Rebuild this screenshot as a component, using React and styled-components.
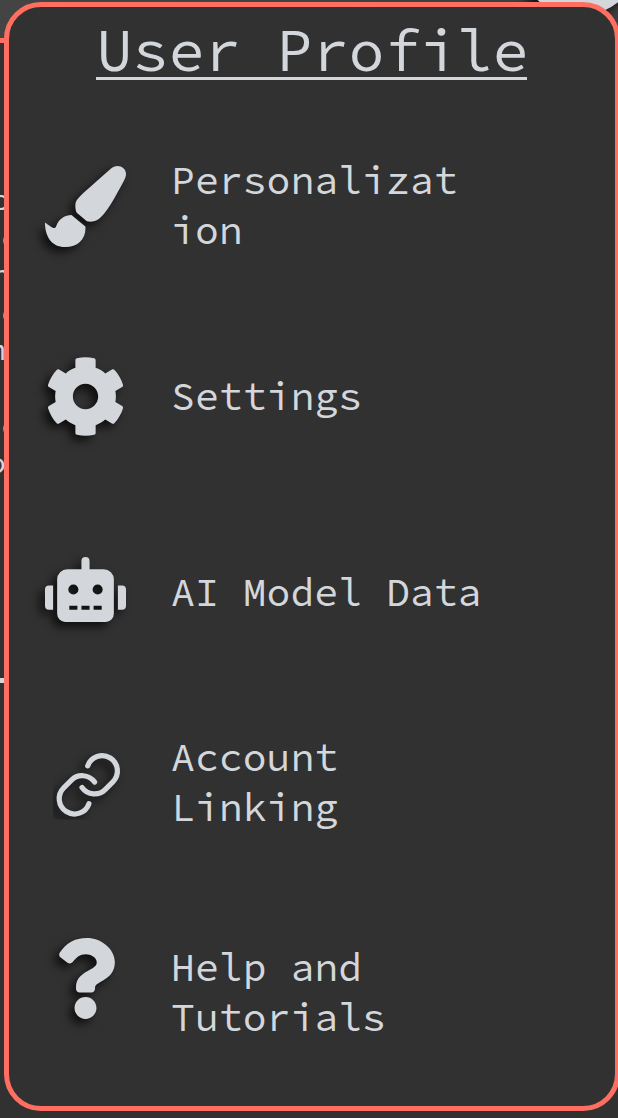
import React from "react";
import styled, { createGlobalStyle } from "styled-components";
import { FaPaintBrush, FaCog, FaRobot, FaQuestion } from "react-icons/fa";

const mono = `"Source Code Pro", "Noto Sans Mono CJK JP", "DejaVu Sans Mono", monospace`;

const GlobalStyle = createGlobalStyle`
  * { box-sizing: border-box; }
  body { margin: 0; overflow: hidden; background: #313131; }
`;

const Page = styled.main`
  display: grid;
  grid-template: 1118px / 618px;
  overflow: hidden;
  background: #313131;
  color: #d3d7dc;
  font-family: ${mono};
`;

const Backdrop = styled.div`
  grid-area: 1 / 1;
  display: flex;
  flex-direction: column;
  overflow: hidden;
`;

const TopBar = styled.header`
  display: flex;
  justify-content: flex-end;
  align-items: flex-end;
  flex: none;
  height: 43px;
  padding-bottom: 22px;
  background: linear-gradient(90deg, #444444, #3d3d3d);
  border-bottom: 5px solid #ff6f61;
`;

const Avatar = styled.div`
  flex: none;
  width: 124px;
  height: 124px;
  margin-right: -23px;
  border-radius: 50%;
  background: #d3d7dc;
  box-shadow: -5px 5px 8px #111;
`;

const Notes = styled.div`
  display: flex;
  flex-direction: column;
  width: 9px;
  height: 497px;
  margin-top: 138px;
  font-size: 30px;
  line-height: 37.6px;
`;

const NoteLine = styled.span`
  height: 37.6px;
  margin-left: ${(p) => p.$start}px;
`;

const Divider = styled.div`
  flex: none;
  width: 8px;
  height: 5px;
  background: #d3d7dc;
`;

const Panel = styled.section`
  grid-area: 1 / 1;
  z-index: 1;
  width: 616px;
  height: 1109px;
  margin: 2px 0 0 4px;
  border: 5px solid #ff6f61;
  border-radius: 37px;
  background: #313131;
`;

const Title = styled.h1`
  width: 431px;
  height: 73px;
  margin: 0 0 0 87.4px;
  border-bottom: 3px solid #d3d7dc;
  font-size: 60px;
  font-weight: 400;
  line-height: 86px;
  white-space: pre;
`;

const Menu = styled.nav`
  display: flex;
  flex-direction: column;
  padding: 30px 0 0 36px;
`;

const Row = styled.div`
  display: flex;
  align-items: center;
  gap: 45px;
  height: ${(p) => p.$height}px;
`;

const IconBox = styled.span`
  display: flex;
  flex: none;
  margin-bottom: ${(p) => p.$lift || 0}px;
  font-size: 81px;
  filter: drop-shadow(-5px 5px 5px rgba(0, 0, 0, 0.7));
  clip-path: ${(p) => (p.$clipped ? "inset(0 0 6px 8px)" : "none")};
`;

const Label = styled.span`
  padding-bottom: 1px;
  font-size: 39.8px;
  line-height: 50px;
  white-space: pre;
`;

const LinkIcon = () => (
  <svg width="81" height="81" viewBox="45 745 81 81" fill="none" stroke="currentColor" strokeWidth="5.2" strokeLinecap="round">
    <path
      id="half"
      d="M87.7 765.8 A15.3 15.3 0 1 1 112.9 781.8 L105.4 789.3 A15.3 15.3 0 0 1 82 787.5"
    />
    <use href="#half" transform="rotate(180 88.3 784.8)" />
  </svg>
);

const notes = [
  { text: "o", start: -8 },
  { text: "c", start: 1 },
  { text: "n", start: -8 },
  { text: "c", start: 1 },
  { text: "m", start: -13 },
  { text: "", start: 0 },
  { text: "c", start: 1 },
  { text: "o", start: -12 },
];

const items = [
  { icon: <FaPaintBrush />, text: "Personalizat\nion", height: 191, lift: -1 },
  { icon: <FaCog />, text: "Settings", height: 191, lift: 0 },
  { icon: <FaRobot />, text: "AI Model Data", height: 201, lift: 6 },
  { icon: <LinkIcon />, text: "Account\nLinking", height: 179, lift: -5, clipped: true },
  { icon: <FaQuestion />, text: "Help and\nTutorials", height: 241, lift: 28 },
];

export default function App() {
  return (
    <Page>
      <GlobalStyle />
      <Backdrop>
        <TopBar>
          <Avatar />
        </TopBar>
        <Notes>
          {notes.map((line, i) => (
            <NoteLine key={i} $start={line.start}>
              {line.text}
            </NoteLine>
          ))}
        </Notes>
        <Divider />
      </Backdrop>
      <Panel>
        <Title>User Profile</Title>
        <Menu>
          {items.map((item) => (
            <Row key={item.text} $height={item.height}>
              <IconBox $lift={item.lift} $clipped={item.clipped}>
                {item.icon}
              </IconBox>
              <Label>{item.text}</Label>
            </Row>
          ))}
        </Menu>
      </Panel>
    </Page>
  );
}
